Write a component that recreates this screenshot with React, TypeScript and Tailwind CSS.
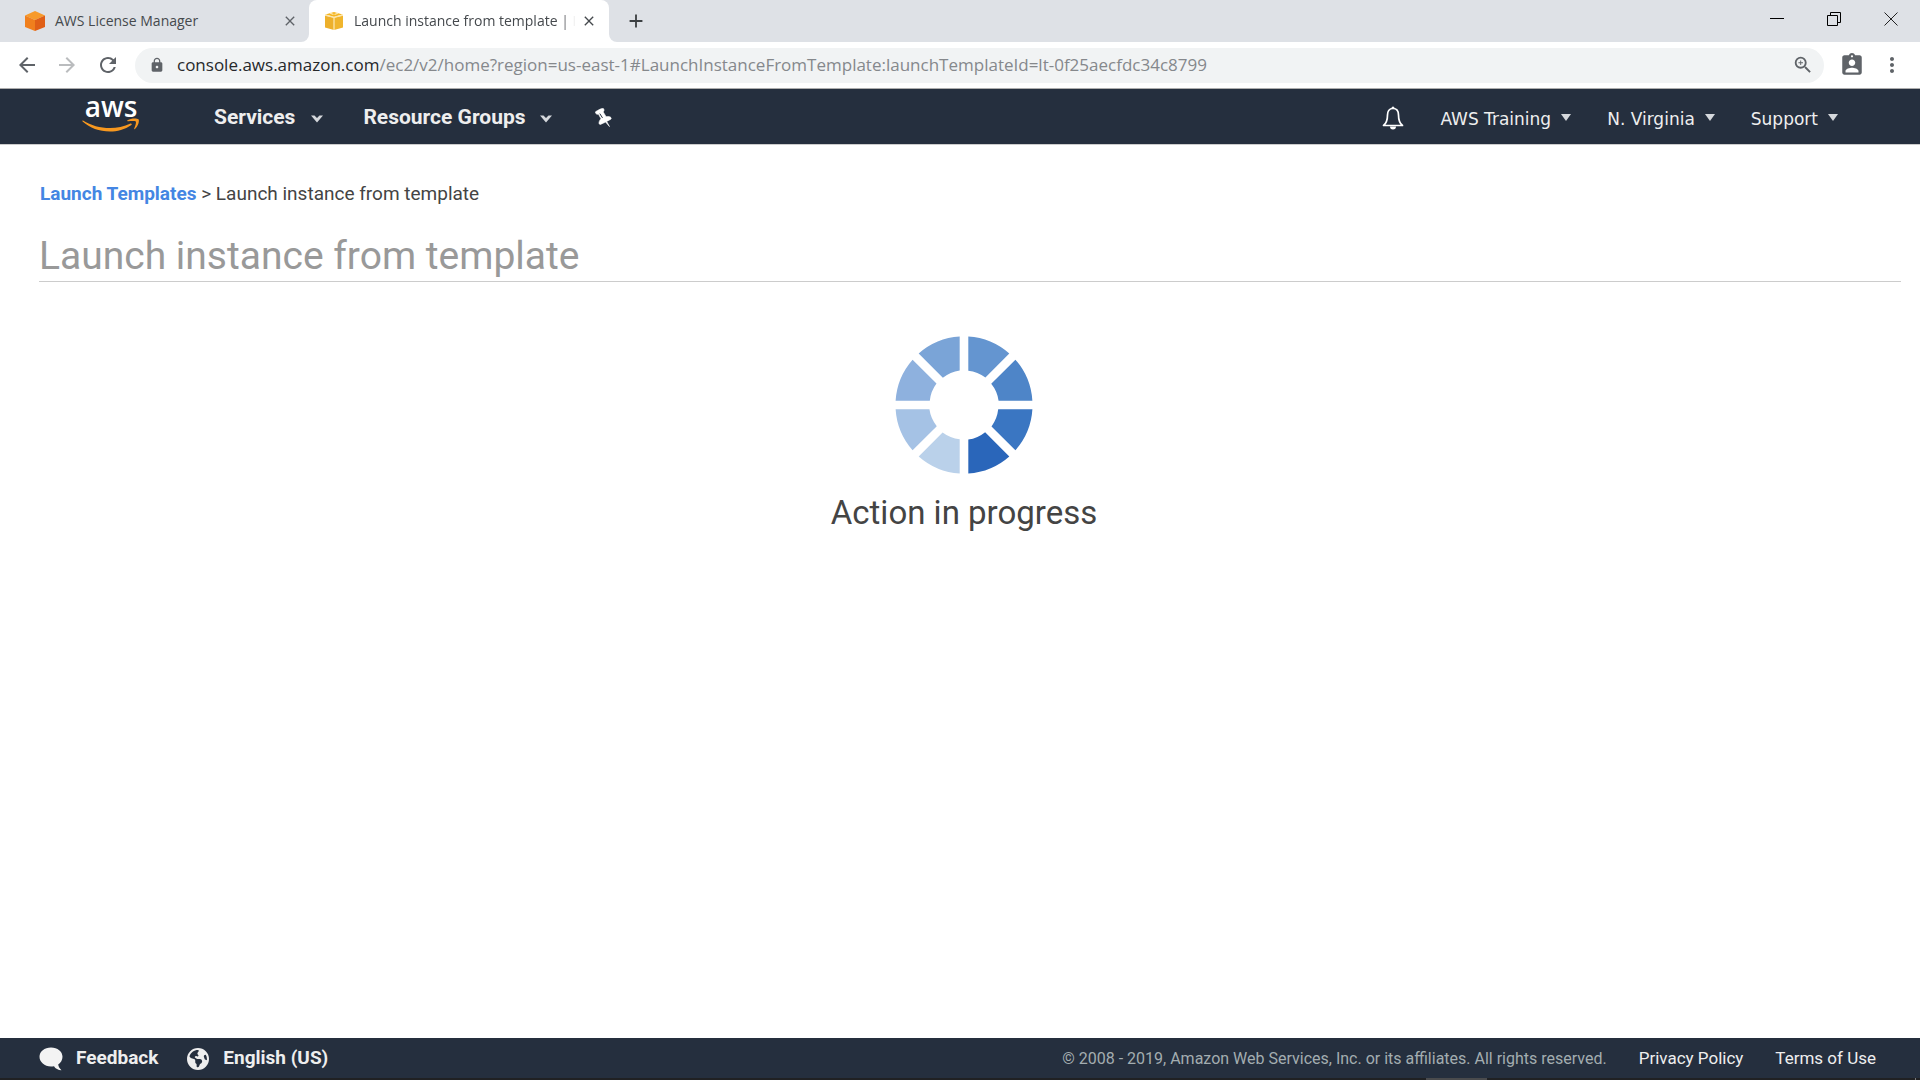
import React from "react";
import {
  MdArrowBack,
  MdArrowForward,
  MdRefresh,
  MdLock,
  MdZoomIn,
  MdAssignmentInd,
  MdMoreVert,
  MdClose,
  MdAdd,
} from "react-icons/md";
import { FaEarthAmericas } from "react-icons/fa6";

function CubeIcon() {
  return (
    <svg viewBox="0 0 20 20" className="size-5 shrink-0" aria-hidden="true">
      <path d="M10 0 20 4.500 10 9 0 4.500Z" fill="#f79a2b" />
      <path d="M0 4.500 10 9V20L0 16Z" fill="#f07f1d" />
      <path d="M20 4.500 10 9V20l10-4Z" fill="#e05f17" />
    </svg>
  );
}

function BoxIcon() {
  return (
    <svg viewBox="0 0 18 18" className="size-[18px] shrink-0" aria-hidden="true">
      <path d="M0 3.500 9 5.700V18L0 15.500Z" fill="#edb02b" />
      <path d="M18 3.500 9 5.700V18l9-2.500Z" fill="#f0b52d" />
      <path d="M.5 2.500 9 0l8.500 2.500L9 5Z" fill="#f5b621" />
      <path d="M0 3 9 5.400 18 3M9 5.400V18M5 1.200l3.500 1.300M13 1.200 9.500 2.500" fill="none" stroke="#fbe5ae" strokeWidth="1.300" />
    </svg>
  );
}

function Chevron() {
  return (
    <svg viewBox="0 0 12 8" className="mt-0.5 h-2 w-3" aria-hidden="true">
      <path d="M0 .5h3.500L6 3 8.500.5H12L6 7.500Z" fill="#d5d8dc" />
    </svg>
  );
}

function Caret() {
  return (
    <svg viewBox="0 0 10 7" className="mb-1 h-[7px] w-2.5" aria-hidden="true">
      <path d="M0 0h10L5 7Z" fill="#d5d8dc" />
    </svg>
  );
}

function AwsLogo() {
  return (
    <a href="#home" aria-label="AWS home" className="mb-1.5 ml-[82px] flex w-[58px] flex-col items-center">
      <span className="font-['Open_Sans',sans-serif] text-[28px] leading-[22px] font-semibold text-white">aws</span>
      <svg viewBox="0 0 58 15" className="h-[15px] w-[58px]" aria-hidden="true">
        <path d="M1 3.500C9 8.500 18 11 28 11c7 0 14-1.500 20.500-4.500 1-.4 1.800.7.900 1.400C43 12.500 35 14.500 28 14.500 17 14.500 8 11 .6 4.500.1 4 .5 3.200 1 3.500Z" fill="#f7981f" />
        <path d="M45.500 3.200C49 1 55 1 56.500 2.300c1.200 1.500-.3 7-3.500 9.700-.6.400-1 .1-.8-.4.800-2 2.300-6 1.600-7-.8-1-5-.6-7.500-.4-1 .1-1.400-.6-.8-1Z" fill="#f7981f" />
      </svg>
    </a>
  );
}

function PinIcon() {
  return (
    <svg viewBox="0 0 17 19" className="h-[19px] w-[17px]" aria-hidden="true">
      <path
        d="M.3 4.300C0 3.500 7 0 8 .3c1 .5 1.300 2 .8 2.800l-.6.800 2.900 4.800c2-.2 4.200-.2 4.900 1 .5 1 0 1.500-.6 1.800l-3.700 1.900 2.800 5.200-3.900-4.500-5.100 2.300c-.9.200-1.600-.5-1.500-1.700.1-1.500 1.200-3 2-4L3.500 6.300C2 6.500.7 6 .3 4.300Z"
        fill="#fff"
        stroke="#fff"
        strokeWidth=".6"
      />
      <path d="m4.800 5.600 2.700 4.300" stroke="#252f3e" strokeWidth="1" />
    </svg>
  );
}

function BellIcon() {
  return (
    <svg viewBox="0 0 22 24" className="h-6 w-[22px]" aria-hidden="true">
      <path d="M11 2.500c-4 0-5.500 3-5.500 6.500 0 5-.8 8-4 10.500h19c-3.200-2.500-4-5.500-4-10.500 0-3.500-1.500-6.500-5.500-6.500Z" fill="none" stroke="#fff" strokeWidth="1.700" strokeLinejoin="round" />
      <path d="M9.500 2a1.500 1.500 0 0 1 3 0ZM8 20.500h6a3 3 0 0 1-6 0Z" fill="#fff" />
    </svg>
  );
}

function CommentIcon() {
  return (
    <svg viewBox="0 0 24 24" className="size-6" aria-hidden="true">
      <path d="M12 .5c6.500 0 11.500 4 11.500 9.300 0 3.200-1.700 6-4.300 7.700.3 2 1.300 4 3.300 5.700-3.500-.2-6-1.500-7.500-4-1 .2-2 .3-3 .3C5.500 19.500.5 15 .5 9.800.5 4.500 5.500.5 12 .5Z" fill="#f3f3f3" />
    </svg>
  );
}

const segments = [
  { color: "#6495d0", angle: 0 },
  { color: "#4e85c8", angle: 45 },
  { color: "#3a76c2", angle: 90 },
  { color: "#2a66ba", angle: 135 },
  { color: "#bad1ea", angle: 180 },
  { color: "#a5c2e5", angle: 225 },
  { color: "#8eb1de", angle: 270 },
  { color: "#7aa4d7", angle: 315 },
];

function Spinner() {
  return (
    <svg viewBox="-69 -69 138 138" className="size-[138px]" role="img" aria-label="Loading">
      {segments.map((s) => (
        <path
          key={s.angle}
          d="M4.300-68.400A68.500 68.500 0 0 1 45.300-51.400L21.400-27.500A34.500 34.500 0 0 0 4.300-34.200Z"
          fill={s.color}
          transform={`rotate(${s.angle})`}
        />
      ))}
    </svg>
  );
}

function TabStrip() {
  return (
    <div className="flex h-[42px] bg-[#dee1e6] font-['Open_Sans',sans-serif] text-[14px] text-[#45494d]">
      <div className="flex w-[309px] items-center bg-white">
        <div className="flex h-full w-full items-center rounded-br-lg bg-[#dee1e6] pr-[11px] pl-[25px]">
          <CubeIcon />
          <span className="ml-2.5 grow pb-px whitespace-nowrap">AWS License Manager</span>
          <button aria-label="Close tab"><MdClose className="size-4 text-[#5f6368]" /></button>
        </div>
      </div>
      <div className="flex w-[300px] items-center rounded-t-lg bg-white pr-3 pl-4">
        <BoxIcon />
        <div className="ml-[11px] flex grow items-center">
          <span className="mask-r-from-92% mask-r-to-98% pb-px whitespace-nowrap">Launch instance from template | E</span>
        </div>
        <button aria-label="Close tab"><MdClose className="size-4 text-[#45494d]" /></button>
      </div>
      <div className="flex grow bg-white">
        <div className="flex grow items-center rounded-bl-lg bg-[#dee1e6] pl-4">
          <button aria-label="New tab"><MdAdd className="size-[22px] text-[#3c4043]" /></button>
          <div className="mr-[22px] mb-1 ml-auto flex items-center gap-[43px]">
            <button aria-label="Minimize">
              <svg viewBox="0 0 14 14" className="size-3.5"><path d="M0 6.500h14" stroke="#000" /></svg>
            </button>
            <button aria-label="Restore">
              <svg viewBox="0 0 14 14" className="size-3.5"><path d="M.5 3.500h10v10H.5ZM3.500 3V.5h10v10H11" fill="none" stroke="#000" /></svg>
            </button>
            <button aria-label="Close window">
              <svg viewBox="0 0 14 14" className="size-3.5"><path d="m.5.5 13 13M13.500.5l-13 13" stroke="#222" /></svg>
            </button>
          </div>
        </div>
      </div>
    </div>
  );
}

function Toolbar() {
  return (
    <div className="flex h-[47px] items-center border-b border-[#adadad] bg-white pr-4 pl-[15px] text-[#5f6368]">
      <button aria-label="Back"><MdArrowBack className="size-6" /></button>
      <button aria-label="Forward" className="ml-4 text-[#babcbe]"><MdArrowForward className="size-6" /></button>
      <button aria-label="Reload" className="ml-[17px]"><MdRefresh className="size-6" /></button>
      <div className="ml-[15px] flex h-[35px] grow items-center rounded-full bg-[#f1f3f4] pr-2.5 pl-3.5">
        <MdLock className="size-4" />
        <div role="textbox" aria-label="Address" className="ml-3 grow font-['Open_Sans',sans-serif] text-[17px] whitespace-nowrap text-[#85888c]">
          <span className="text-[#26282b]">console.aws.amazon.com</span>/ec2/v2/home?region=us-east-1#LaunchInstanceFromTemplate:launchTemplateId=lt-0f25aecfdc34c8799
        </div>
        <button aria-label="Zoom"><MdZoomIn className="size-[22px]" /></button>
      </div>
      <button aria-label="Profile" className="ml-[15px]"><MdAssignmentInd className="size-[26px]" /></button>
      <button aria-label="Menu" className="ml-[15px]"><MdMoreVert className="size-6" /></button>
    </div>
  );
}

function NavBar() {
  return (
    <nav className="flex h-14 items-center border-b border-[#ccc] bg-[#252f3e]">
      <AwsLogo />
      <div className="mt-0.5 ml-[74px] flex items-center font-[Roboto,sans-serif] text-[21px] font-bold text-[#eee]">
        <button className="flex items-center gap-4">Services <Chevron /></button>
        <button className="ml-10 flex items-center gap-3.5">Resource Groups <Chevron /></button>
        <button aria-label="Pin shortcuts" className="ml-[43px]"><PinIcon /></button>
      </div>
      <div className="mt-1.5 mr-[82px] ml-auto flex items-center gap-9 font-['DejaVu_Sans',sans-serif] text-[17px] text-[#eee]">
        <button aria-label="Notifications" className="mb-1"><BellIcon /></button>
        <button className="flex items-center gap-2.5">AWS Training <Caret /></button>
        <button className="flex items-center gap-2.5">N. Virginia <Caret /></button>
        <button className="flex items-center gap-2.5">Support <Caret /></button>
      </div>
    </nav>
  );
}

export default function App() {
  return (
    <div className="flex min-h-screen flex-col bg-white font-[Roboto,sans-serif] text-[#444]">
      <TabStrip />
      <Toolbar />
      <NavBar />
      <main className="grow pt-[37px] pr-[19px] pl-[39px]">
        <div className="pl-px text-[19px] leading-6">
          <a href="#templates" className="font-bold text-[#4486e3]">Launch Templates</a> &gt; Launch instance from template
        </div>
        <h1 className="mt-[25px] border-b border-[#ccc] text-[39px] leading-[50px] text-[#999]">Launch instance from template</h1>
        <div className="mt-[54px] mr-3 flex flex-col items-center">
          <Spinner />
          <p className="mt-[19px] text-[33px] leading-10">Action in progress</p>
        </div>
      </main>
      <footer className="flex h-10 items-center bg-[#252f3e] pt-px pr-11 pl-[39px] text-[17px] text-[#eee]">
        <button className="flex items-center gap-[13px] text-[19px] font-bold"><CommentIcon />Feedback</button>
        <button className="ml-[29px] flex items-center gap-3.5 text-[19px] font-bold"><FaEarthAmericas className="size-[22px]" />English (US)</button>
        <span className="ml-auto text-[16px] text-[#a3adb0]">© 2008 - 2019, Amazon Web Services, Inc. or its affiliates. All rights reserved.</span>
        <a href="#privacy" className="ml-8">Privacy Policy</a>
        <a href="#terms" className="ml-8">Terms of Use</a>
      </footer>
      <div className="flex h-0.5 justify-end bg-[#202123]">
        <div className="mr-[428px] w-[61px] bg-[#4a4b4d]" />
        <div className="mr-1 w-px bg-[#777]" />
      </div>
    </div>
  );
}
